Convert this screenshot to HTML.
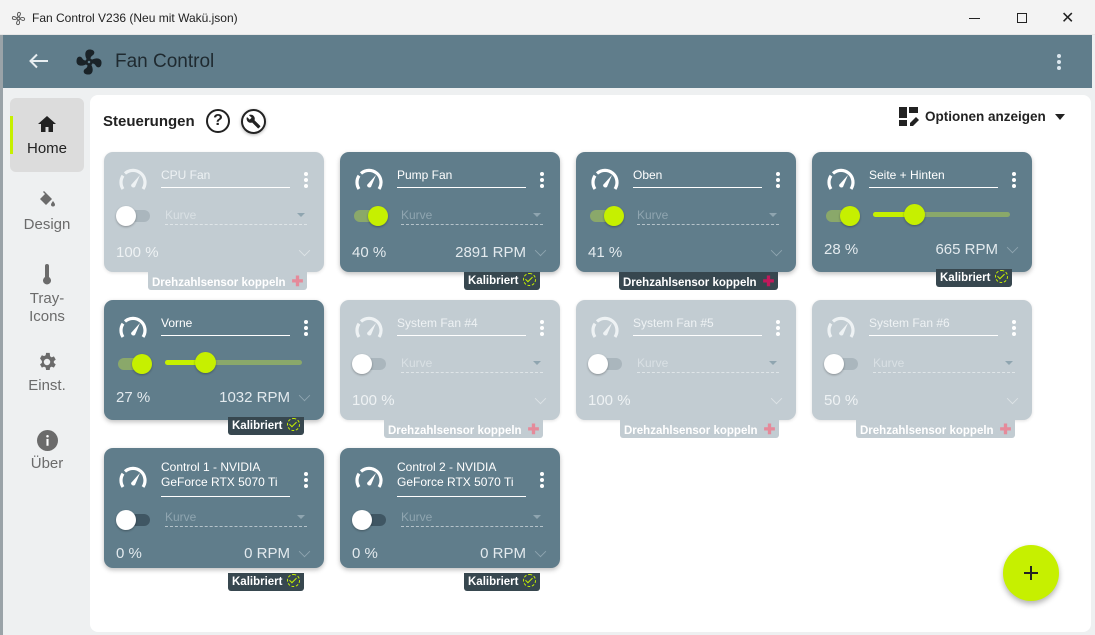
<!DOCTYPE html>
<html><head><meta charset="utf-8"><style>
*{box-sizing:border-box;margin:0;padding:0}
body{width:1095px;height:635px;overflow:hidden;background:#eef0f1;font-family:"Liberation Sans",Arial,sans-serif;position:relative}
.tb{position:absolute;left:0;top:0;width:1095px;height:35px;background:#f3f3f3;border-bottom:1px solid #e6e6e6}
.tb .t{position:absolute;left:32px;top:11px;font-size:12px;color:#222}
.hd{position:absolute;left:3px;top:35px;width:1089px;height:53px;background:#607d8b}
.side{position:absolute;left:3px;top:88px;width:84px;height:547px;background:#eef0f1}
.nav{position:absolute;left:10px;width:74px;text-align:center;color:#6b6b6b;font-size:15px}
.panel{position:absolute;left:90px;top:95px;width:1001px;height:537px;background:#fff;border-radius:8px}
.c{position:absolute;width:220px;height:120px;border-radius:9px;background:#607d8b;box-shadow:0 2px 5px rgba(0,0,0,.25);color:#fff}
.c.d{background:#c2ccd2;box-shadow:0 1px 3px rgba(0,0,0,.12);color:#eef2f4}
.g{position:absolute;left:14px;top:14px}
.nm{position:absolute;left:57px;top:16px;font-size:12px;line-height:15px;width:129px;height:20px;border-bottom:1.3px solid #fff}
.nm.two{top:12px;height:37px}
.dots{position:absolute;left:200px;top:20px;width:4px}
.dots i{display:block;width:4px;height:4px;border-radius:2px;background:#fff;margin-bottom:2px}
.tg{position:absolute;left:14px;top:58px;width:32px;height:12px;border-radius:6px;background:#3f5663}
.d .tg{background:#aab6bd}
.tg b{position:absolute;left:-2px;top:-4px;width:20px;height:20px;border-radius:10px;background:#fff;box-shadow:0 1px 2px rgba(0,0,0,.3)}
.tg.on{background:#8aa86a}.tg.on b{left:14px;background:#c6f000}
.kv{position:absolute;left:61px;top:56px;width:142px;height:17px;font-size:12px;color:#8fa5b0;border-bottom:1px dashed #b5c3ca}
.d .kv{color:#d9e0e4;border-color:#dfe5e8}
.kv:after{content:"";position:absolute;right:2px;top:5px;border:4px solid transparent;border-top:4px solid #8fa5b0}
.pc{position:absolute;left:12px;top:92px;font-size:15px;color:#e3eaee}
.d .pc{color:#eef2f4}
.rp{position:absolute;right:34px;top:92px;font-size:15px;color:#e3eaee}
.cv{position:absolute;left:196px;top:94px;width:9px;height:9px;border-right:1.5px solid #8fa5b0;border-bottom:1.5px solid #8fa5b0;transform:rotate(45deg) scale(.9)}
.d .cv{border-color:#dde3e6}
.sl{position:absolute;left:61px;top:60px;width:137px;height:5px;border-radius:3px;background:#8aa86a}
.sl i{position:absolute;left:0;top:0;height:5px;border-radius:3px;background:#c6f000}
.sl b{position:absolute;top:-8px;width:21px;height:21px;border-radius:11px;background:#c6f000;box-shadow:0 1px 2px rgba(0,0,0,.3)}
.bd{position:absolute;height:18px;font-size:11.5px;font-weight:bold;color:#fff;line-height:18px;padding:0 4px;border-radius:0 0 3px 3px}
.bd.k{background:#37474f}
.bd.s{background:#c2ccd2;color:#fff}
.ck{display:inline-block;width:13px;height:13px;border-radius:7px;border:1.5px dashed #c6f000;vertical-align:-2px;margin-left:4px;position:relative}
.ck:after{content:"";position:absolute;left:3px;top:1px;width:3px;height:6px;border-right:1.5px solid #c6f000;border-bottom:1.5px solid #c6f000;transform:rotate(45deg)}
.x{display:inline-block;color:#e58a9a;margin-left:6px;font-size:14px}
</style></head><body>
<div class="tb">
<svg style="position:absolute;left:11px;top:11px" width="15" height="15" viewBox="0 0 16 16" fill="none" stroke="#555" stroke-width="1"><circle cx="8" cy="8" r="1.5"/><path d="M8 6.5C6 4 7 1 9 1.5 11 2 10 5 8 6.5M9.5 8C12 6 15 7 14.5 9 14 11 11 10 9.5 8M8 9.5C10 12 9 15 7 14.5 5 14 6 11 8 9.5M6.5 8C4 10 1 9 1.5 7 2 5 5 6 6.5 8"/></svg>
<div class="t">Fan Control V236 (Neu mit Wakü.json)</div>
<div style="position:absolute;left:969px;top:18px;width:11px;height:1px;background:#222"></div>
<div style="position:absolute;left:1017px;top:13px;width:10px;height:10px;border:1px solid #222"></div>
<div style="position:absolute;left:1061px;top:8px;font-size:16px;color:#222">✕</div>
</div>
<div style="position:absolute;left:0;top:35px;width:3px;height:600px;background:#9aa3a8"></div>
<div class="hd">
<svg style="position:absolute;left:26px;top:18px" width="20" height="16" viewBox="0 0 20 16"><path d="M19 8H2M8 1.5L1.5 8 8 14.5" stroke="#e8eef1" stroke-width="2" fill="none"/></svg>
<svg style="position:absolute;left:71px;top:12px" width="30" height="30" viewBox="0 0 24 24" fill="#1a2328"><path d="M12 11a1 1 0 1 0 0 2 1 1 0 0 0 0-2m.5-9c4.5 0 4.6 3.57 2.25 4.75-.99.49-1.430 1.54-1.62 2.47.48.2.9.51 1.22.91 3.7-2 7.68-1.21 7.68 2.37 0 4.5-3.570 4.6-4.75 2.25-.5-.99-1.56-1.43-2.47-1.62-.2.48-.51.89-.91 1.22 1.99 3.69 1.2 7.65-2.37 7.65C7 22 6.91 18.43 9.25 17.25c.98-.49 1.42-1.53 1.62-2.45-.49-.2-.92-.52-1.24-.92C5.94 15.85 2 15.07 2 11.5 2 7 5.56 6.89 6.74 9.26c.5.99 1.55 1.42 2.47 1.61.19-.48.51-.9.92-1.22C8.14 5.96 8.93 2 12.5 2z"/></svg>
<div style="position:absolute;left:112px;top:16px;font-size:19px;color:#1f2a30">Fan Control</div>
<div class="dots" style="left:1054px;top:19px"><i style="background:#dbe7ee"></i><i style="background:#dbe7ee"></i><i style="background:#dbe7ee"></i></div>
</div>
<div class="side"></div>
<div style="position:absolute;left:10px;top:98px;width:74px;height:74px;background:#dcdcdc;border-radius:6px"></div>
<div style="position:absolute;left:10px;top:116px;width:3px;height:38px;background:#c6f000"></div>
<div class="nav" style="top:115px;color:#222"><svg width="20" height="18" viewBox="0 0 20 18"><path d="M10 1L1 9h3v8h4.5v-5h3v5H16V9h3z" fill="#222"/></svg><div style="font-size:15px;margin-top:3px">Home</div></div>
<div class="nav" style="top:190px"><svg width="20" height="20" viewBox="0 0 20 20"><path d="M7 1l-1 1 2 2-5 5 6 6 6-6zM16 11c0 0-2 2.5-2 3.5a2 2 0 0 0 4 0c0-1-2-3.5-2-3.5z" fill="#6b6b6b"/></svg><div style="margin-top:2px">Design</div></div>
<div class="nav" style="top:264px"><svg width="12" height="22" viewBox="0 0 12 22"><path d="M4 2a2 2 0 0 1 4 0v11a4 4 0 1 1-4 0z" fill="#6b6b6b"/></svg><div style="line-height:18px">Tray-<br>Icons</div></div>
<div class="nav" style="top:351px"><svg width="22" height="22" viewBox="0 0 24 24"><path fill="#6b6b6b" d="M12 15.5A3.5 3.5 0 1 1 12 8.5a3.5 3.5 0 0 1 0 7m7.43-2.53c.04-.32.07-.64.07-.97s-.03-.66-.07-1l2.11-1.63-2-3.46-2.49 1a7.3 7.3 0 0 0-1.690-.98L14.96 2h-4l-.38 2.65c-.61.25-1.17.59-1.69.98l-2.49-1-2 3.46L6.5 11c-.04.34-.07.67-.07 1s.03.65.07.97l-2.11 1.66 2 3.46 2.49-1.01c.52.4 1.08.73 1.69.98l.38 2.65h4l.38-2.65c.61-.25 1.17-.58 1.69-.98l2.49 1.01 2-3.46z"/></svg><div>Einst.</div></div>
<div class="nav" style="top:430px"><svg width="21" height="21" viewBox="0 0 20 20"><circle cx="10" cy="10" r="10" fill="#6b6b6b"/><rect x="9" y="8.5" width="2" height="6.5" fill="#fff"/><circle cx="10" cy="6" r="1.2" fill="#fff"/></svg><div>Über</div></div>

<div class="panel"></div>
<div style="position:absolute;left:103px;top:113px;font-size:15px;font-weight:bold;color:#222">Steuerungen</div>
<div style="position:absolute;left:206px;top:109px;width:24px;height:24px;border:2px solid #222;border-radius:12px;text-align:center;font-weight:bold;font-size:16px;line-height:20px;color:#222">?</div>
<div style="position:absolute;left:241px;top:109px;width:25px;height:25px;border:2px solid #222;border-radius:13px;box-shadow:0 1px 3px rgba(0,0,0,.3)"><svg style="position:absolute;left:3px;top:3px" width="15" height="15" viewBox="0 0 24 24"><path fill="#222" d="M22.7 19l-9.1-9.1c.9-2.3.4-5-1.5-6.9-2-2-5-2.4-7.4-1.3L9 6 6 9 1.6 4.7C.4 7.1.9 10.1 2.9 12.1c1.9 1.9 4.6 2.4 6.9 1.5l9.1 9.1c.4.4 1 .4 1.4 0l2.3-2.3c.5-.4.5-1.1.1-1.4z"/></svg></div>
<svg style="position:absolute;left:899px;top:107px" width="20" height="20" viewBox="0 0 20 20" fill="#222"><rect x="0" y="0" width="8" height="11"/><rect x="10" y="0" width="9" height="6"/><rect x="0" y="13" width="8" height="6"/><path d="M11 19v-3l6-6 3 3-6 6z"/></svg>
<div style="position:absolute;left:925px;top:109px;font-size:13.5px;font-weight:bold;color:#222">Optionen anzeigen</div>
<div style="position:absolute;left:1055px;top:114px;border:5px solid transparent;border-top:6px solid #222"></div>

<svg width="0" height="0" style="position:absolute"><defs><symbol id="ga" viewBox="0 0 30 26"><path d="M5 23A12 12 0 1 1 25 23" fill="none" stroke="currentColor" stroke-width="3.2" stroke-dasharray="14 3 40"/><path d="M13 19l9-10-5 12a2.5 2.5 0 0 1-4-2z" fill="currentColor"/></symbol></defs></svg>

<div class="c d" style="left:104px;top:152px"><svg class="g" width="30" height="26"><use href="#ga"/></svg><div class="nm">CPU Fan</div><div class="dots"><i></i><i></i><i></i></div><div class="tg"><b></b></div><div class="kv">Kurve</div><div class="pc">100 %</div><div class="cv"></div></div>
<div class="bd s" style="left:148px;top:272px">Drehzahlsensor koppeln<span class="x">✚</span></div>

<div class="c" style="left:340px;top:152px"><svg class="g" width="30" height="26"><use href="#ga"/></svg><div class="nm">Pump Fan</div><div class="dots"><i></i><i></i><i></i></div><div class="tg on"><b></b></div><div class="kv">Kurve</div><div class="pc">40 %</div><div class="rp">2891 RPM</div><div class="cv"></div></div>
<div class="bd k" style="left:464px;top:272px">Kalibriert<span class="ck"></span></div>

<div class="c" style="left:576px;top:152px"><svg class="g" width="30" height="26"><use href="#ga"/></svg><div class="nm">Oben</div><div class="dots"><i></i><i></i><i></i></div><div class="tg on"><b></b></div><div class="kv">Kurve</div><div class="pc">41 %</div><div class="cv"></div></div>
<div class="bd k" style="left:619px;top:272px">Drehzahlsensor koppeln<span class="x" style="color:#c2185b">✚</span></div>

<div class="c" style="left:812px;top:152px"><svg class="g" width="30" height="26"><use href="#ga"/></svg><div class="nm">Seite + Hinten</div><div class="dots"><i></i><i></i><i></i></div><div class="tg on"><b></b></div><div class="sl"><i style="width:42px"></i><b style="left:31px"></b></div><div class="pc" style="top:89px">28 %</div><div class="rp" style="top:89px">665 RPM</div><div class="cv" style="top:91px"></div></div>
<div class="bd k" style="left:936px;top:269px">Kalibriert<span class="ck"></span></div>

<div class="c" style="left:104px;top:300px"><svg class="g" width="30" height="26"><use href="#ga"/></svg><div class="nm">Vorne</div><div class="dots"><i></i><i></i><i></i></div><div class="tg on"><b></b></div><div class="sl"><i style="width:41px"></i><b style="left:30px"></b></div><div class="pc" style="top:89px">27 %</div><div class="rp" style="top:89px">1032 RPM</div><div class="cv" style="top:91px"></div></div>
<div class="bd k" style="left:228px;top:417px">Kalibriert<span class="ck"></span></div>

<div class="c d" style="left:340px;top:300px"><svg class="g" width="30" height="26"><use href="#ga"/></svg><div class="nm">System Fan #4</div><div class="dots"><i></i><i></i><i></i></div><div class="tg"><b></b></div><div class="kv">Kurve</div><div class="pc">100 %</div><div class="cv"></div></div>
<div class="bd s" style="left:384px;top:420px">Drehzahlsensor koppeln<span class="x">✚</span></div>

<div class="c d" style="left:576px;top:300px"><svg class="g" width="30" height="26"><use href="#ga"/></svg><div class="nm">System Fan #5</div><div class="dots"><i></i><i></i><i></i></div><div class="tg"><b></b></div><div class="kv">Kurve</div><div class="pc">100 %</div><div class="cv"></div></div>
<div class="bd s" style="left:620px;top:420px">Drehzahlsensor koppeln<span class="x">✚</span></div>

<div class="c d" style="left:812px;top:300px"><svg class="g" width="30" height="26"><use href="#ga"/></svg><div class="nm">System Fan #6</div><div class="dots"><i></i><i></i><i></i></div><div class="tg"><b></b></div><div class="kv">Kurve</div><div class="pc">50 %</div><div class="cv"></div></div>
<div class="bd s" style="left:856px;top:420px">Drehzahlsensor koppeln<span class="x">✚</span></div>

<div class="c" style="left:104px;top:448px"><svg class="g" width="30" height="26" style="top:16px"><use href="#ga"/></svg><div class="nm two">Control 1 - NVIDIA<br>GeForce RTX 5070 Ti</div><div class="dots" style="top:24px"><i></i><i></i><i></i></div><div class="tg" style="top:66px"><b></b></div><div class="kv" style="top:62px">Kurve</div><div class="pc" style="top:97px">0 %</div><div class="rp" style="top:97px">0 RPM</div><div class="cv" style="top:99px"></div></div>
<div class="bd k" style="left:228px;top:573px">Kalibriert<span class="ck"></span></div>

<div class="c" style="left:340px;top:448px"><svg class="g" width="30" height="26" style="top:16px"><use href="#ga"/></svg><div class="nm two">Control 2 - NVIDIA<br>GeForce RTX 5070 Ti</div><div class="dots" style="top:24px"><i></i><i></i><i></i></div><div class="tg" style="top:66px"><b></b></div><div class="kv" style="top:62px">Kurve</div><div class="pc" style="top:97px">0 %</div><div class="rp" style="top:97px">0 RPM</div><div class="cv" style="top:99px"></div></div>
<div class="bd k" style="left:464px;top:573px">Kalibriert<span class="ck"></span></div>

<div style="position:absolute;left:1003px;top:545px;width:56px;height:56px;border-radius:28px;background:#c6f000;box-shadow:0 3px 6px rgba(0,0,0,.3)"><div style="position:absolute;left:21px;top:27px;width:14px;height:2px;background:#222"></div><div style="position:absolute;left:27px;top:21px;width:2px;height:14px;background:#222"></div></div>
</body></html>
